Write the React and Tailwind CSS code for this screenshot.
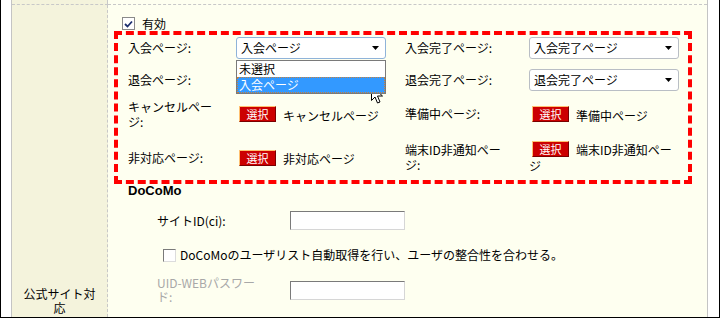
import React from 'react';

const jp = "font-['Noto_Sans_CJK_JP','Noto_Sans_CJK_SC',sans-serif]";

// small black triangle used in the selects
const Arrow = () => (
  <svg width="7" height="4" viewBox="0 0 7 4">
    <path d="M0 0h7L3.5 4z" fill="#000" />
  </svg>
);

const Select = ({ value, focused, children }) => (
  <div className="relative w-[150px]">
    <div
      className={`h-[22px] w-[150px] bg-white rounded-[3px] border flex items-center justify-between pl-[4px] pr-[6px] leading-[14px] ${
        focused ? 'border-[#8fb3d9]' : 'border-[#b9bec5]'
      }`}
    >
      <span>{value}</span>
      <Arrow />
    </div>
    {children}
  </div>
);

const PickButton = () => (
  <span className="inline-block align-top w-[37px] h-[16px] ml-[3px] mr-[7px] bg-[#cc0000] text-white text-[11px] leading-[14px] text-center border border-t-[#ffc070] border-l-[#ffc070] border-b-[#7a0000] border-r-[#7a0000]">
    選択
  </span>
);

const Cursor = () => (
  <svg className="absolute left-[135px] top-[48px]" width="13" height="20" viewBox="0 0 13 20">
    <path d="M0.5 0.5v15l3.5-3.5 2.5 6 2.5-1-2.5-6h5z" fill="#fff" stroke="#000" strokeWidth="1" strokeLinejoin="round" />
  </svg>
);

const TextInput = () => (
  <div className="w-[115px] h-[19px] bg-white border border-t-[#7a7a7a] border-l-[#7a7a7a] border-b-[#d6d6d6] border-r-[#d6d6d6]" />
);

export default function App() {
  return (
    <div className={`w-[720px] h-[318px] bg-white border-l border-r border-b border-black pl-[10px] pr-[11px] overflow-hidden text-[12px] text-black ${jp}`}>
      <div className="h-[317px] flex flex-col border-l border-r border-[#c4c4c4]">
        {/* tail of the row above */}
        <div className="flex h-[5px]">
          <div className="w-[96px] bg-[#f4f3dc] border-r border-b border-dashed border-[#c8c8c8]" />
          <div className="flex-1 bg-[#fefff0] border-b border-dashed border-[#c8c8c8]" />
        </div>

        <div className="flex flex-1 min-h-0">
          <div className="w-[96px] bg-[#f4f3dc] border-r border-dashed border-[#c8c8c8] flex flex-col justify-end items-center pb-[2px] leading-[14px] text-center">
            公式サイト対
            <br />
            応
          </div>

          <div className="flex-1 bg-[#fefff0] pl-[6px]">
            {/* enable checkbox */}
            <div className="mt-[12px] ml-[8px] h-[13px] flex items-center">
              <span className="w-[13px] h-[13px] bg-white border border-[#8a8a8a] flex items-center justify-center">
                <svg width="9" height="8" viewBox="0 0 9 8">
                  <path d="M1 4l2.5 2.5L8 1.5" fill="none" stroke="#1c2f6e" strokeWidth="1.8" />
                </svg>
              </span>
              <span className="ml-[7px] leading-[13px]">有効</span>
            </div>

            {/* highlighted page settings */}
            <div className="mt-[1px] w-[578px] h-[153px] border-4 border-dashed border-[#ff0000] pl-[10px]">
              <div className="grid grid-cols-[108px_169px_124px_150px] grid-rows-[26px_38px_30px_51px] items-center">
                <div className="leading-[14px]">入会ページ:</div>
                <Select value="入会ページ" focused>
                  <div className="absolute top-[23px] left-0 w-[150px] z-10 bg-white border border-[#7a7a7a] leading-[16px]">
                    <div className="h-[16px] pl-[2px]">未選択</div>
                    <div className="h-[16px] pl-[2px] bg-[#3399ff] text-white outline-1 outline-dotted outline-[#c8803c] -outline-offset-1">
                      入会ページ
                    </div>
                  </div>
                  <Cursor />
                </Select>
                <div className="leading-[14px]">入会完了ページ:</div>
                <Select value="入会完了ページ" />

                <div className="leading-[14px]">退会ページ:</div>
                <Select value="退会ページ" />
                <div className="leading-[14px]">退会完了ページ:</div>
                <Select value="退会完了ページ" />

                <div className="leading-[15px]">
                  キャンセルペー
                  <br />
                  ジ:
                </div>
                <div className="flex items-center leading-[16px]">
                  <PickButton />
                  <span className="mt-[3px]">キャンセルページ</span>
                </div>
                <div className="leading-[14px]">準備中ページ:</div>
                <div className="flex items-center leading-[16px]">
                  <PickButton />
                  <span className="mt-[3px]">準備中ページ</span>
                </div>

                <div className="mt-[6px] leading-[14px]">非対応ページ:</div>
                <div className="mt-[6px] flex items-center leading-[16px]">
                  <PickButton />
                  <span className="mt-[3px]">非対応ページ</span>
                </div>
                <div className="mt-[4px] leading-[15px]">
                  端末ID非通知ペー
                  <br />
                  ジ:
                </div>
                <div className="mt-[6px] leading-[16px]">
                  <PickButton />
                  <span className="inline-block mt-[1px]">端末ID非通知ペー</span>
                  <br />
                  ジ
                </div>
              </div>
            </div>

            {/* DoCoMo settings */}
            <div className="ml-[14px] h-[13px] leading-[13px] font-['Liberation_Sans',sans-serif] font-bold text-[13px]">
              DoCoMo
            </div>

            <div className="ml-[14px] mt-[14px] h-[19px] flex items-center">
              <div className="ml-[29px] w-[133px] leading-[14px]">サイトID(ci):</div>
              <TextInput />
            </div>

            <div className="ml-[14px] mt-[17px] h-[16px] flex items-center">
              <span className="ml-[35px] w-[13px] h-[13px] bg-white border border-t-[#7a7a7a] border-l-[#7a7a7a] border-b-[#dcdcdc] border-r-[#dcdcdc]" />
              <span className="ml-[4px] leading-[14px]">
                DoCoMoのユーザリスト自動取得を行い、ユーザの整合性を合わせる。
              </span>
            </div>

            <div className="ml-[14px] mt-[17px] h-[20px] flex items-center">
              <div className="ml-[29px] w-[133px] leading-[14px] text-[#a8a8a8]">
                UID-WEBパスワー
                <br />
                ド:
              </div>
              <TextInput />
            </div>
          </div>
        </div>
      </div>
    </div>
  );
}
